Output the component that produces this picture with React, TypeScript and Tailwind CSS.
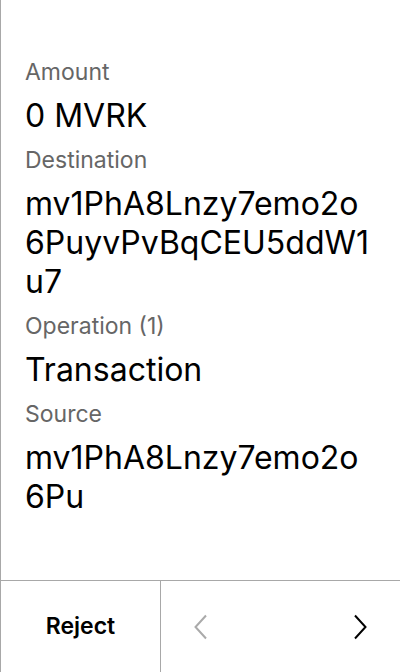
import React from "react";

type Field = {
  label: string;
  value: string;
};

const fields: Field[] = [
  { label: "Amount", value: "0 MVRK" },
  { label: "Destination", value: "mv1PhA8Lnzy7emo2o6PuyvPvBqCEU5ddW1u7" },
  { label: "Operation (1)", value: "Transaction" },
  { label: "Source", value: "mv1PhA8Lnzy7emo2o6Pu" },
];

function Chevron({ dir, className }: { dir: "left" | "right"; className?: string }) {
  return (
    <svg width="16" height="26" viewBox="0 0 16 26" fill="none" className={className}>
      <path
        d={dir === "left" ? "M13 1.5 L2.5 13 L13 24.5" : "M3 1.5 L13.5 13 L3 24.5"}
        stroke="currentColor"
        strokeWidth="2"
      />
    </svg>
  );
}

export default function App() {
  return (
    <div
      className="flex h-[672px] w-[400px] flex-col border-l border-[#a8a8a8] bg-white"
      style={{ fontFamily: "Inter, 'Noto Sans', sans-serif" }}
    >
      {/* review fields */}
      <div className="flex flex-1 flex-col gap-[11px] px-6 pt-[58px]">
        {fields.map((f) => (
          <div key={f.label} className="flex flex-col gap-[10px]">
            <p className="text-[23px] leading-[28px] text-[#666666]">{f.label}</p>
            <p className="break-all text-[32px] leading-[39px] text-black">{f.value}</p>
          </div>
        ))}
      </div>

      {/* footer ------------------------------------------------------ */}
      <div className="flex h-[92px] border-t border-[#a8a8a8]">
        <button className="flex w-[160px] items-center justify-center border-r border-[#a8a8a8] text-[23px] font-semibold text-black">
          Reject
        </button>
        <div className="flex flex-1 items-center justify-between pl-[32px] pr-[32px]">
          <Chevron dir="left" className="text-[#aaaaaa]" />
          <Chevron dir="right" className="text-black" />
        </div>
      </div>
    </div>
  );
}
